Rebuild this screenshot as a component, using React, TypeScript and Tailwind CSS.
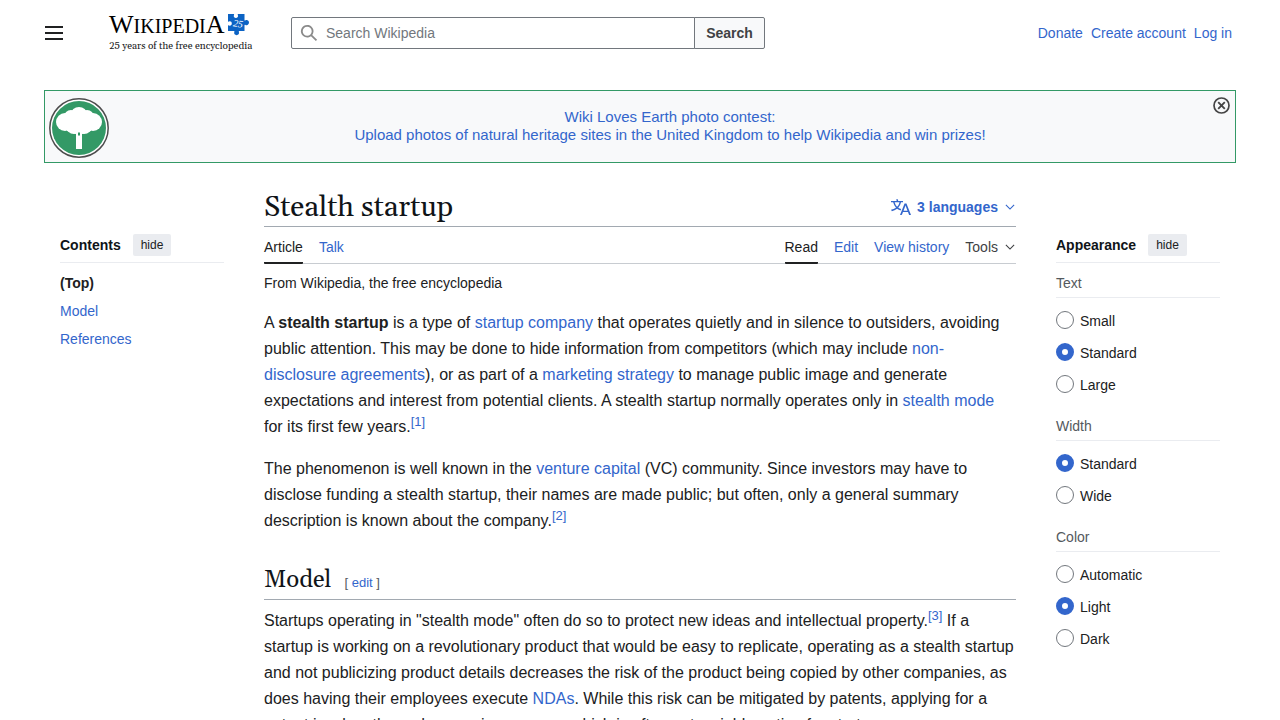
import type { ReactNode } from "react";

const link = "text-[#3366cc] hover:underline";

function MenuIcon() {
  return (
    <svg viewBox="0 0 20 20" className="size-5" fill="currentColor" aria-hidden="true">
      <path d="M1 3v2h18V3zm0 8h18V9H1zm0 6h18v-2H1z" />
    </svg>
  );
}

function SearchIcon() {
  return (
    <svg viewBox="0 0 20 20" className="size-[18px] shrink-0 text-[#8a8a8a]" fill="currentColor" aria-hidden="true">
      <path
        fillRule="evenodd"
        d="M12.2 13.6a7 7 0 1 1 1.4-1.4l5.4 5.4-1.4 1.4zM3 8a5 5 0 1 0 10 0A5 5 0 0 0 3 8"
      />
    </svg>
  );
}

function LanguageIcon() {
  return (
    <svg viewBox="0 0 20 20" className="size-5" fill="currentColor" aria-hidden="true">
      <path d="M20 18h-1.44a.6.6 0 0 1-.4-.12.8.8 0 0 1-.23-.31L17 15h-5l-1 2.54a.8.8 0 0 1-.22.3.6.6 0 0 1-.4.14H9l4.55-11.47h1.89zm-3.53-4.31L14.89 9.5a12 12 0 0 1-.39-1.24q-.09.37-.19.69l-.19.56-1.58 4.19zm-6.3-1.58a13.4 13.4 0 0 1-2.91-1.41 11.46 11.46 0 0 0 2.81-5.37H12V4H7.31a4 4 0 0 0-.2-.56C6.87 2.79 6.6 2 6.6 2l-1.47.5s.4.89.6 1.5H0v1.33h2.15A11.23 11.23 0 0 0 5 10.7a17.2 17.2 0 0 1-5 2.1q.56.82.87 1.38a23.3 23.3 0 0 0 5.22-2.51 15.6 15.6 0 0 0 3.56 1.77zM3.63 5.33h4.91a8.1 8.1 0 0 1-2.45 4.45 9.1 9.1 0 0 1-2.46-4.45" />
    </svg>
  );
}

function ChevronIcon() {
  return (
    <svg viewBox="0 0 20 20" className="size-[10px]" fill="currentColor" aria-hidden="true">
      <path d="m17.5 4.75-7.5 7.5-7.5-7.5L1 6.25l9 9 9-9z" />
    </svg>
  );
}

function PuzzleIcon() {
  return (
    <svg viewBox="0 0 21 22" className="mt-px h-[22px] w-[21px] shrink-0" aria-hidden="true">
      <path
        fill="#0c63c4"
        d="M0 0H5.500C6.300 0 6.200.6 5.900 1.200C5.300 2.600 6.300 3.900 7.900 3.900S10.500 2.600 9.900 1.200C9.600.6 9.500 0 10.300 0H16.500V6C16.500 6.800 17 6.600 17.500 6.300C19.200 5.400 21 6.700 21 8.600S19.200 11.800 17.500 10.900C17 10.600 16.500 10.500 16.500 11.300V17H11.500C10.700 17 10.700 17.500 10.900 18.100C11.500 19.700 10.300 21.200 8.600 21.200S5.700 19.700 6.300 18.100C6.500 17.500 6.500 17 5.700 17H0V12C0 11.200.5 11.200 1.100 11.500C2.500 12.100 3.800 11.100 3.800 9.500S2.500 6.900 1.100 7.500C.5 7.800 0 7.800 0 7Z"
      />
      <text
        x="5"
        y="13"
        fill="#fff"
        transform="rotate(8 10 10)"
        className="font-['Liberation_Serif',serif] text-[10px] italic"
      >
        25
      </text>
    </svg>
  );
}

function TreeBadge() {
  return (
    <svg viewBox="0 0 60 60" className="size-[60px] shrink-0" aria-hidden="true">
      <circle cx="30" cy="30" r="29.200" fill="#fff" stroke="#4d4d4d" strokeWidth="1.500" />
      <circle cx="30" cy="30" r="27" fill="#339966" />
      <g fill="#fff">
        <ellipse cx="30" cy="16" rx="8" ry="7" />
        <circle cx="22" cy="19" r="7" />
        <circle cx="38" cy="19" r="7" />
        <circle cx="16" cy="24" r="9" />
        <circle cx="44" cy="24" r="9" />
        <circle cx="25" cy="28" r="8" />
        <circle cx="35" cy="28" r="8" />
        <path d="M18 20h24v13l-9 3v15h-6V36l-9-3z" />
      </g>
      <path d="M29 34.500h2v2.500l-1 1-1-1z" fill="#339966" />
    </svg>
  );
}

function Logo() {
  return (
    <a href="#home" className="ml-[45px] block w-[140px] font-['Liberation_Serif',serif] text-black">
      <span className="flex h-[26px] items-start justify-between">
        <span className="flex items-baseline leading-[24px]">
          <span className="text-[26px]">W</span>
          <span className="text-[20px]">IKIPEDI</span>
          <span className="text-[26px]">A</span>
        </span>
        <PuzzleIcon />
      </span>
      <span className="block whitespace-nowrap font-[Georgia,Gelasio,'Liberation_Serif',serif] text-[10px] lining-nums leading-[14px] text-[#202122]">
        25 years of the free encyclopedia
      </span>
    </a>
  );
}

function HideButton() {
  return (
    <button type="button" className="h-[22px] rounded-[2px] bg-[#eaecf0] px-2 text-[12px] leading-[22px] text-[#202122]">
      hide
    </button>
  );
}

function PanelHeader({ title }: { title: string }) {
  return (
    <div className="flex h-[29px] items-start gap-3 border-b border-[#eaecf0]">
      <h2 className="font-bold leading-[22px] text-[#101418]">{title}</h2>
      <HideButton />
    </div>
  );
}

function Options({ title, name, values, selected }: { title: string; name: string; values: string[]; selected: string }) {
  return (
    <fieldset>
      <legend className="w-full border-b border-[#eaecf0] pb-[3px] leading-[22px] text-[#54595d]">{title}</legend>
      <div className="flex flex-col gap-[10px] pt-3">
        {values.map((value) => (
          <label key={value} className="flex items-start gap-[6px] leading-[22px]">
            <input
              type="radio"
              name={name}
              defaultChecked={value === selected}
              className="mt-px size-[18px] shrink-0 appearance-none rounded-full border border-[#72777d] bg-white checked:border-[6px] checked:border-[#3366cc]"
            />
            {value}
          </label>
        ))}
      </div>
    </fieldset>
  );
}

function Tab({ children, active, id }: { children: ReactNode; active?: boolean; id: string }) {
  return (
    <a
      href={`#${id}`}
      className={
        active
          ? "-mb-px h-[37px] rounded-[1px] border-b-2 border-[#202122] pt-[9px] leading-[22px] text-[#202122]"
          : "pt-[9px] leading-[22px] text-[#3366cc]"
      }
    >
      {children}
    </a>
  );
}

function Ref({ n }: { n: number }) {
  return (
    <sup className="text-[13px] leading-none">
      <a href={`#cite-${n}`} className={link}>
        [{n}]
      </a>
    </sup>
  );
}

export default function App() {
  return (
    <div className="min-h-screen bg-white font-['Liberation_Sans',Arial,sans-serif] text-[14px] text-[#202122]">
      <header className="flex h-[66px] items-center px-11">
        <button type="button" aria-label="Main menu">
          <MenuIcon />
        </button>
        <Logo />
        <form className="ml-[42px] flex h-8 w-[474px]" role="search">
          <label className="flex flex-1 items-center gap-2 rounded-l-[2px] border border-[#72777d] pl-2">
            <SearchIcon />
            <input
              type="search"
              aria-label="Search Wikipedia"
              placeholder="Search Wikipedia"
              className="h-full w-full min-w-0 outline-none placeholder:text-[#72777d]"
            />
          </label>
          <button
            type="submit"
            className="-ml-px w-[71px] rounded-r-[2px] border border-[#72777d] bg-[#f8f9fa] font-bold text-[#404244]"
          >
            Search
          </button>
        </form>
        <nav className="ml-auto flex gap-2 pr-1">
          <a href="#donate" className={link}>Donate</a>
          <a href="#create" className={link}>Create account</a>
          <a href="#login" className={link}>Log in</a>
        </nav>
      </header>

      <aside className="relative mx-11 mt-6 flex items-center border border-[#339966] bg-[#f8f9fa] px-1 pb-1 pt-[7px]">
        <TreeBadge />
        <a href="#contest" className="flex-1 pb-1 text-center text-[15px] leading-[18px] text-[#3366cc]">
          Wiki Loves Earth photo contest:
          <br />
          Upload photos of natural heritage sites in the United Kingdom to help Wikipedia and win prizes!
        </a>
        <button type="button" aria-label="Close" className="absolute right-[5px] top-[5px]">
          <svg viewBox="0 0 18 18" className="size-[18px]" fill="none" stroke="#444" aria-hidden="true">
            <circle cx="9.500" cy="9.500" r="7.500" strokeWidth="1.700" />
            <path d="m6.200 6.200 6.600 6.600m0-6.600-6.600 6.600" strokeWidth="1.900" />
          </svg>
        </button>
      </aside>

      <div className="grid grid-cols-[164px_minmax(0,1fr)_164px] gap-10 px-[60px] pt-[26px]">
        <nav className="pt-[45px]">
          <PanelHeader title="Contents" />
          <ul className="flex flex-col gap-[6px] pt-[9px] leading-[22px]">
            <li><a href="#top" className="font-bold text-[#202122]">(Top)</a></li>
            <li><a href="#Model" className={link}>Model</a></li>
            <li><a href="#References" className={link}>References</a></li>
          </ul>
        </nav>

        <main>
          <div className="flex h-[38px] items-start justify-between border-b border-[#a2a9b1] pr-px">
            <h1 className="font-[Georgia,Gelasio,'Liberation_Serif',serif] text-[29px] leading-[38px] text-[#101418]">
              Stealth startup
            </h1>
            <button type="button" className="flex h-9 items-center font-bold text-[#3366cc]">
              <LanguageIcon />
              <span className="ml-[6px] mr-[7px]">3 languages</span>
              <ChevronIcon />
            </button>
          </div>
          <div className="flex h-[37px] justify-between border-b border-[#c8ccd1] pr-px">
            <div className="flex gap-4">
              <Tab id="article" active>Article</Tab>
              <Tab id="talk">Talk</Tab>
            </div>
            <div className="flex gap-4">
              <Tab id="read" active>Read</Tab>
              <Tab id="edit">Edit</Tab>
              <Tab id="history">View history</Tab>
              <button type="button" className="flex items-center gap-[7px] self-start pt-[9px] leading-[22px] text-[#404244]">
                Tools
                <ChevronIcon />
              </button>
            </div>
          </div>
          <p className="pt-2 leading-[22px]">From Wikipedia, the free encyclopedia</p>
          <div className="text-[16px] leading-[26px]">
            <p className="mt-4">
              A <b>stealth startup</b> is a type of <a href="#startup" className={link}>startup company</a> that operates
              quietly and in silence to outsiders, avoiding public attention. This may be done to hide information from
              competitors (which may include <a href="#nda" className={link}>non-disclosure agreements</a>), or as part of
              a <a href="#marketing" className={link}>marketing strategy</a> to manage public image and generate
              expectations and interest from potential clients. A stealth startup normally operates only in{" "}
              <a href="#stealth" className={link}>stealth mode</a> for its first few years.<Ref n={1} />
            </p>
            <p className="mt-4">
              The phenomenon is well known in the <a href="#vc" className={link}>venture capital</a> (VC) community. Since
              investors may have to disclose funding a stealth startup, their names are made public; but often, only a
              general summary description is known about the company.<Ref n={2} />
            </p>
            <div id="Model" className="mt-[26px] flex h-10 items-baseline gap-[13px] border-b border-[#a2a9b1]">
              <h2 className="font-[Georgia,Gelasio,'Liberation_Serif',serif] text-[24px] leading-[40px] text-[#101418]">Model</h2>
              <span className="text-[13px] text-[#54595d]">
                [ <a href="#edit-model" className={link}>edit</a> ]
              </span>
            </div>
            <p className="mt-2">
              Startups operating in "stealth mode" often do so to protect new ideas and intellectual property.
              <Ref n={3} /> If a startup is working on a revolutionary product that would be easy to replicate, operating
              as a stealth startup and not publicizing product details decreases the risk of the product being copied by
              other companies, as does having their employees execute <a href="#ndas" className={link}>NDAs</a>. While
              this risk can be mitigated by patents, applying for a patent is a lengthy and expensive process, which is
              often not a viable option for startups.
            </p>
          </div>
        </main>

        <aside className="pt-[45px]">
          <PanelHeader title="Appearance" />
          <div className="flex flex-col gap-[19px] pt-[9px]">
            <Options title="Text" name="text" values={["Small", "Standard", "Large"]} selected="Standard" />
            <Options title="Width" name="width" values={["Standard", "Wide"]} selected="Standard" />
            <Options title="Color" name="color" values={["Automatic", "Light", "Dark"]} selected="Light" />
          </div>
        </aside>
      </div>
    </div>
  );
}
